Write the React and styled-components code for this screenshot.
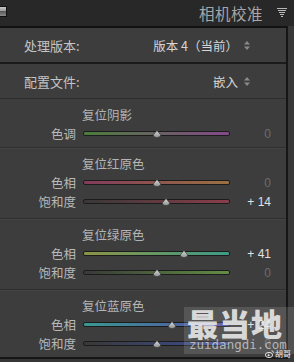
import React from "react";
import styled, { createGlobalStyle } from "styled-components";

const Global = createGlobalStyle`
  html, body { margin: 0; padding: 0; background: #2c2c2c; }
  body { font-family: "Noto Sans CJK SC", "Noto Sans", sans-serif; }
`;

const Frame = styled.div`
  position: relative;
  width: 294px;
  height: 362px;
  overflow: hidden;
  display: flex;
  flex-direction: column;
  background: #363636;
`;

const Header = styled.div`
  height: 26px;
  flex: none;
  background: #282828;
  display: flex;
  align-items: center;
  box-sizing: border-box;
  padding: 0 7px 0 0;
`;

const Switch = styled.div`
  width: 7px;
  height: 11px;
  margin-top: -4px;
  box-sizing: border-box;
  border: 1px solid #101010;
  border-left: none;
  background: linear-gradient(#c8c8c8 0%, #9a9a9a 45%, #5a5a5a 50%, #8a8a8a 100%);
`;

const HeaderTitle = styled.div`
  margin-left: auto;
  margin-right: 14px;
  font-size: 15.5px;
  color: #a6a6a6;
  letter-spacing: 0.5px;
  line-height: 26px;
`;

const Body = styled.div`
  flex: 1;
  display: flex;
  min-height: 0;
`;

const Panel = styled.div`
  width: 288px;
  flex: none;
  box-sizing: border-box;
  background: #3d3d3d;
  border-top: 2px solid #121212;
  border-right: 2px solid #161616;
  border-bottom: 2px solid #161616;
  height: 333px;
  display: flex;
  flex-direction: column;
`;

const Strip = styled.div`
  flex: 1;
  background: #383838;
`;

const SettingRow = styled.div`
  height: 34px;
  flex: none;
  display: flex;
  align-items: center;
  padding: 0 36px 0 24px;
  border-bottom: ${(p) => (p.$strong ? "2px solid #1b1b1b" : "1px solid #2d2d2d")};
  font-size: 13px;
  color: #c4c4c4;
`;

const SettingValue = styled.div`
  margin-left: auto;
  display: flex;
  align-items: center;
  gap: 6px;
  color: #d6d6d6;
  font-size: 12.5px;
`;

const Section = styled.div`
  flex: none;
  padding: 7px 0 ${(p) => p.$pb}px 0;
  border-top: ${(p) => (p.$first ? "none" : "1px solid #2f2f2f")};
  box-shadow: ${(p) => (p.$first ? "none" : "inset 0 1px 0 #444")};
`;

const SectionTitle = styled.div`
  height: 18px;
  line-height: 18px;
  padding-left: 82px;
  font-size: 12.5px;
  color: #b4b4b4;
`;

const SliderRow = styled.div`
  height: 19px;
  display: grid;
  grid-template-columns: 76px 147px 1fr;
  column-gap: 7px;
  align-items: center;
  padding-right: 15px;
`;

const Label = styled.div`
  text-align: right;
  font-size: 12.5px;
  color: #b8b8b8;
  line-height: 19px;
`;

const TrackWrap = styled.div`
  position: relative;
  height: 10px;
  display: flex;
  align-items: center;
`;

const Track = styled.div`
  width: 100%;
  height: 3px;
  border: 1px solid #1c1c1c;
  border-radius: 2px;
  background: linear-gradient(to right, ${(p) => p.$from}, ${(p) => p.$to});
`;

const Thumb = styled.svg`
  position: absolute;
  top: 1px;
  width: 10px;
  height: 9px;
  margin-left: -5px;
`;

const Value = styled.div`
  text-align: right;
  font-family: "Liberation Sans", Arial, sans-serif;
  font-size: 12px;
  color: ${(p) => (p.$zero ? "#6c6c6c" : "#e2e2e2")};
  white-space: pre;
`;

const Watermark = styled.div`
  position: absolute;
  left: 184px;
  top: 307px;
  width: 110px;
  height: 47px;
  background: rgba(230, 230, 230, 0.15);
  display: flex;
  flex-direction: column;
  align-items: flex-start;
`;

const WmBig = styled.div`
  font-family: "Noto Sans CJK SC", sans-serif;
  font-weight: 900;
  font-size: 31px;
  line-height: 31px;
  color: rgba(235, 235, 235, 0.9);
  padding-left: 3px;
  letter-spacing: 1px;
`;

const WmSmall = styled.div`
  font-family: "DejaVu Sans Mono", monospace;
  font-size: 12.5px;
  line-height: 13px;
  color: rgba(215, 215, 215, 0.75);
  padding-left: 5px;
`;

const WmTag = styled.div`
  position: absolute;
  right: 3px;
  bottom: -5px;
  display: flex;
  align-items: center;
  gap: 1px;
  font-size: 8px;
  color: #f0f0f0;
`;

const UpDown = () => (
  <svg width="6" height="9" viewBox="0 0 6 9">
    <path d="M3 0 L6 3.5 L0 3.5 Z M3 9 L6 5.5 L0 5.5 Z" fill="#8a8a8a" />
  </svg>
);

const CollapseIcon = () => (
  <svg width="10" height="10" viewBox="0 0 10 10">
    {[0, 2, 4, 6, 8].map((y, i) => (
      <rect key={y} x={i} y={y} width={10 - 2 * i} height="1" fill="#b8b8b8" />
    ))}
  </svg>
);

const sliders = [
  {
    title: "复位阴影",
    pb: 4,
    first: true,
    rows: [{ label: "色调", value: 0, from: "#4b7c3c", to: "#84488a" }],
  },
  {
    title: "复位红原色",
    pb: 7,
    rows: [
      { label: "色相", value: 0, from: "#823a5a", to: "#9a7042" },
      { label: "饱和度", value: 14, from: "#383838", to: "#8a3e4a" },
    ],
  },
  {
    title: "复位绿原色",
    pb: 7,
    rows: [
      { label: "色相", value: 41, from: "#8c9444", to: "#3e9a88" },
      { label: "饱和度", value: 0, from: "#383838", to: "#628e44" },
    ],
  },
  {
    title: "复位蓝原色",
    pb: 7,
    rows: [
      { label: "色相", value: 24, from: "#3a9890", to: "#544ca8" },
      { label: "饱和度", value: 0, from: "#383838", to: "#3e4e98" },
    ],
  },
];

const Slider = ({ value, from, to }) => (
  <TrackWrap>
    <Track $from={from} $to={to} />
    <Thumb viewBox="0 0 10 9" style={{ left: `${50 + value * 0.45}%` }}>
      <defs>
        <linearGradient id="tg" x1="0" y1="0" x2="0" y2="1">
          <stop offset="0" stopColor="#dcdcdc" />
          <stop offset="1" stopColor="#8e8e8e" />
        </linearGradient>
      </defs>
      <path d="M5 0.5 L8.8 5 A3.9 3.4 0 0 1 1.2 5 Z" fill="url(#tg)" stroke="#2a2a2a" strokeWidth="0.6" />
    </Thumb>
  </TrackWrap>
);

export default function App() {
  return (
    <>
      <Global />
      <Frame>
        <Header>
          <Switch />
          <HeaderTitle>相机校准</HeaderTitle>
          <CollapseIcon />
        </Header>
        <Body>
          <Panel>
            <SettingRow $strong>
              处理版本:
              <SettingValue>
                版本 4（当前）
                <UpDown />
              </SettingValue>
            </SettingRow>
            <SettingRow>
              配置文件:
              <SettingValue>
                嵌入
                <UpDown />
              </SettingValue>
            </SettingRow>
            {sliders.map((s) => (
              <Section key={s.title} $pb={s.pb} $first={s.first}>
                <SectionTitle>{s.title}</SectionTitle>
                {s.rows.map((r) => (
                  <SliderRow key={r.label}>
                    <Label>{r.label}</Label>
                    <Slider value={r.value} from={r.from} to={r.to} />
                    <Value $zero={r.value === 0}>{r.value === 0 ? "0" : `+ ${r.value}`}</Value>
                  </SliderRow>
                ))}
              </Section>
            ))}
          </Panel>
          <Strip />
        </Body>
        <Watermark>
          <WmBig>最当地</WmBig>
          <WmSmall>zuidangdi.com</WmSmall>
          <WmTag>
            <svg width="9" height="8" viewBox="0 0 9 8">
              <ellipse cx="4" cy="5" rx="3.6" ry="2.6" fill="none" stroke="#f0f0f0" strokeWidth="0.9" />
              <circle cx="3.6" cy="5.2" r="1" fill="#f0f0f0" />
              <path d="M6.5 0.8 A2 2 0 0 1 8.5 2.8" fill="none" stroke="#f0f0f0" strokeWidth="0.8" />
            </svg>
            胡哥
          </WmTag>
        </Watermark>
      </Frame>
    </>
  );
}
